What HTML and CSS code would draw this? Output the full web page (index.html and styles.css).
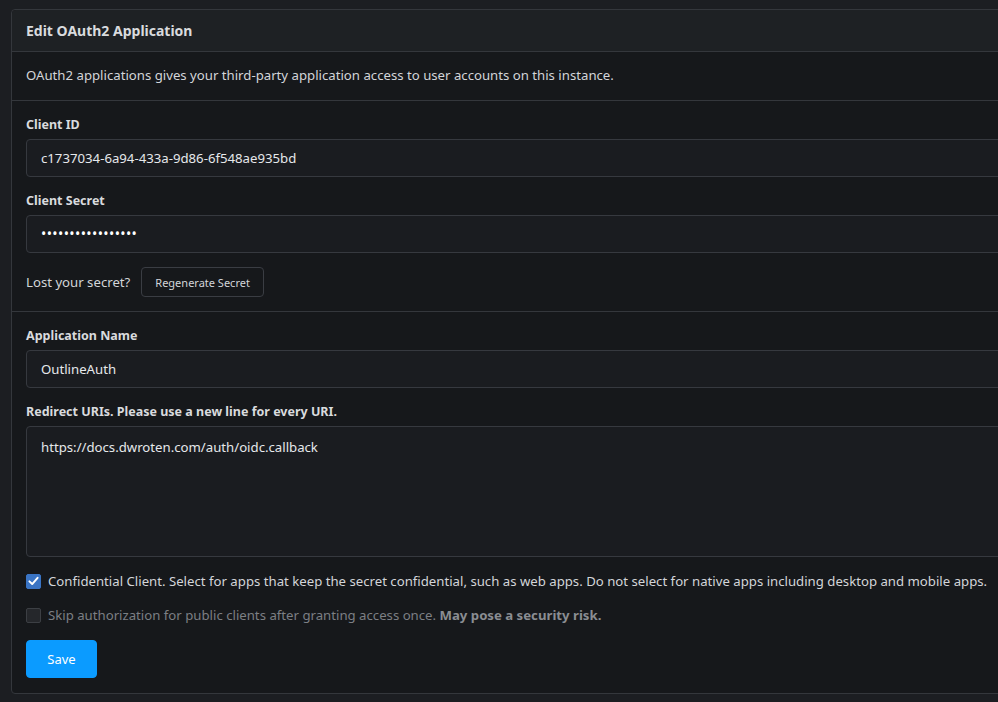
FILE: index.html
```html
<!DOCTYPE html>
<html>
<head>
<meta charset="utf-8">
<link rel="stylesheet" href="styles.css">
</head>
<body>
<div class="card">
  <div class="card-header">Edit OAuth2 Application</div>
  <div class="card-desc">OAuth2 applications gives your third-party application access to user accounts on this instance.</div>
  <div class="card-section">
    <div class="field">
      <label class="label">Client ID</label>
      <div class="input">c1737034-6a94-433a-9d86-6f548ae935bd</div>
    </div>
    <div class="field">
      <label class="label">Client Secret</label>
      <div class="input secret">•••••••••••••••••</div>
    </div>
    <div class="regen">
      <span>Lost your secret?</span>
      <button class="btn-small">Regenerate Secret</button>
    </div>
  </div>
  <div class="card-section last">
    <div class="field">
      <label class="label">Application Name</label>
      <div class="input">OutlineAuth</div>
    </div>
    <div class="field">
      <label class="label">Redirect URIs. Please use a new line for every URI.</label>
      <div class="input textarea">https://docs.dwroten.com/auth/oidc.callback</div>
    </div>
    <div class="check">
      <span class="box checked"><svg viewBox="0 0 14 14" width="14" height="14"><path d="M2.6 7.4 L5.6 10.3 L11.4 3.6" fill="none" stroke="#fff" stroke-width="2.1" stroke-linecap="round" stroke-linejoin="round"/></svg></span>
      <span class="check-text">Confidential Client. Select for apps that keep the secret confidential, such as web apps. Do not select for native apps including desktop and mobile apps.</span>
    </div>
    <div class="check disabled">
      <span class="box"></span>
      <span class="check-text">Skip authorization for public clients after granting access once. <b>May pose a security risk.</b></span>
    </div>
    <button class="btn-primary">Save</button>
  </div>
</div>
</body>
</html>
```

FILE: styles.css
```css
html, body {
  margin: 0;
  padding: 0;
  overflow: hidden;
  background: #1c1e22;
  width: 998px;
  height: 702px;
}
body {
  font-family: "Noto Sans", "Open Sans", sans-serif;
  font-size: 13.2px;
  color: #d3d5d9;
  padding: 9px 0 0 11px;
  box-sizing: border-box;
}
.card {
  width: 1200px;
  border: 1px solid #34373c;
  border-radius: 4px;
  background: #16181b;
}
.card-header {
  background: #1e2124;
  height: 41px;
  line-height: 41px;
  padding-left: 14px;
  font-weight: 700;
  font-size: 14px;
  color: #d9dbde;
  border-bottom: 1px solid #34373c;
  border-radius: 4px 4px 0 0;
}
.card-desc {
  height: 48px;
  line-height: 47px;
  padding-left: 14px;
  border-bottom: 1px solid #34373c;
}
.card-section {
  padding: 14px 0 14px 14px;
  border-bottom: 1px solid #34373c;
  display: flex;
  flex-direction: column;
}
.card-section.last {
  border-bottom: none;
  padding-bottom: 15px;
}
.field {
  display: flex;
  flex-direction: column;
  margin-bottom: 14px;
}
.label {
  font-weight: 700;
  font-size: 12.5px;
  line-height: 20px;
  margin-bottom: 4px;
  color: #d9dbde;
}
.input {
  height: 36px;
  line-height: 36px;
  border: 1px solid #36393f;
  border-radius: 4px;
  background: #1a1c20;
  padding-left: 14px;
  color: #e6e8eb;
}
.input.secret {
  letter-spacing: 0.4px;
  font-size: 14px;
  color: #fff;
}
.input.textarea {
  line-height: 20px;
  padding-top: 10px;
  box-sizing: border-box;
  height: 131px;
}
.regen {
  display: flex;
  align-items: center;
  gap: 11px;
}
.btn-small {
  font-family: inherit;
  font-size: 11px;
  color: #d3d5d9;
  background: #16181b;
  border: 1px solid #3a3d43;
  border-radius: 4px;
  height: 30px;
  padding: 0 13px;
}
.check {
  display: flex;
  align-items: center;
  gap: 7px;
  height: 20px;
  margin-bottom: 14px;
}
.box {
  width: 13px;
  height: 13px;
  border-radius: 2px;
  border: 1px solid #45484e;
  background: #2a2c30;
  display: flex;
  align-items: center;
  justify-content: center;
}
.box.checked {
  background: #3a74c4;
  border-color: #3a74c4;
}
.check.disabled {
  color: #7c7f84;
}
.check.disabled .box {
  background: #25272b;
  border-color: #3c3f44;
}
.check.disabled b {
  color: #8a8d92;
}
.btn-primary {
  align-self: flex-start;
  font-family: inherit;
  font-size: 13px;
  color: #fff;
  background: #0b9bff;
  border: 1px solid #0b9bff;
  border-radius: 4px;
  width: 71px;
  height: 38px;
  margin-top: 1px;
}
```
